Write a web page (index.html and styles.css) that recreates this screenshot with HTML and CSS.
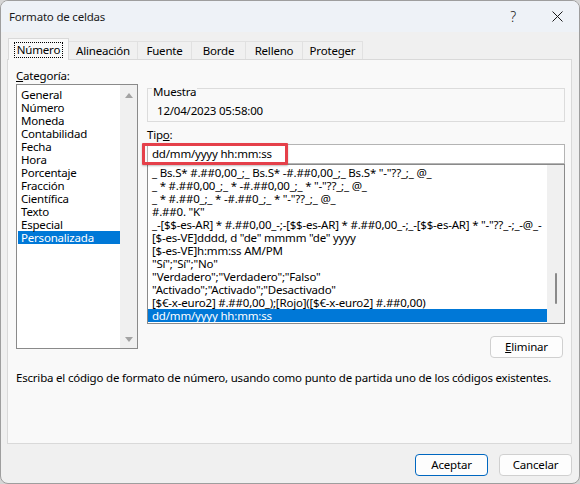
FILE: index.html
```html
<!DOCTYPE html>
<html lang="es">
<head>
<meta charset="utf-8">
<title>Formato de celdas</title>
<link rel="stylesheet" href="styles.css">
</head>
<body>
<div class="dialog">
  <div class="titlebar">
    <div class="title">Formato de celdas</div>
    <div class="tb-btn help">?</div>
    <div class="tb-btn close">
      <svg width="11" height="11" viewBox="0 0 11 11"><path d="M0.5 0.5 L10.5 10.5 M10.5 0.5 L0.5 10.5" stroke="#1a1a1a" stroke-width="1" fill="none"/></svg>
    </div>
  </div>
  <div class="body">
    <div class="tabs">
      <div class="tab tab-active tab-numero"><span class="focus">Número</span></div>
      <div class="tab tab-alineacion">Alineación</div>
      <div class="tab tab-fuente">Fuente</div>
      <div class="tab tab-borde">Borde</div>
      <div class="tab tab-relleno">Relleno</div>
      <div class="tab tab-proteger">Proteger</div>
    </div>
    <div class="panel">
      <div class="columns">
        <div class="col-left">
          <div class="label"><u>C</u>ategoría:</div>
          <div class="listbox cat-list">
            <div class="list-items">
              <div class="item">General</div>
              <div class="item">Número</div>
              <div class="item">Moneda</div>
              <div class="item">Contabilidad</div>
              <div class="item">Fecha</div>
              <div class="item">Hora</div>
              <div class="item">Porcentaje</div>
              <div class="item">Fracción</div>
              <div class="item">Científica</div>
              <div class="item">Texto</div>
              <div class="item">Especial</div>
              <div class="item item-selected">Personalizada</div>
            </div>
            <div class="scrollbar classic">
              <span class="arrow-up"></span>
              <span class="arrow-down"></span>
            </div>
          </div>
        </div>
        <div class="col-right">
          <div class="groupbox">
            <div class="group-label">Muestra</div>
            <div class="sample">12/04/2023 05:58:00</div>
          </div>
          <div class="label tipo-label">Tip<u>o</u>:</div>
          <div class="tipo-field">
            <div class="textbox">dd/mm/yyyy hh:mm:ss</div>
            <div class="highlight"></div>
          </div>
          <div class="listbox type-list">
            <div class="list-items">
              <div class="item">_ Bs.S* #.##0,00_;_ Bs.S* -#.##0,00_;_ Bs.S* "-"??_;_ @_</div>
              <div class="item">_ * #.##0,00_;_ * -#.##0,00_;_ * "-"??_;_ @_</div>
              <div class="item">_ * #.##0_;_ * -#.##0_;_ * "-"??_;_ @_</div>
              <div class="item">#.##0. "K"</div>
              <div class="item">_-[$$-es-AR] * #.##0,00_-;-[$$-es-AR] * #.##0,00_-;_-[$$-es-AR] * "-"??_-;_-@_-</div>
              <div class="item">[$-es-VE]dddd, d "de" mmmm "de" yyyy</div>
              <div class="item">[$-es-VE]h:mm:ss AM/PM</div>
              <div class="item">"Sí";"Sí";"No"</div>
              <div class="item">"Verdadero";"Verdadero";"Falso"</div>
              <div class="item">"Activado";"Activado";"Desactivado"</div>
              <div class="item">[$€-x-euro2] #.##0,00_);[Rojo]([$€-x-euro2] #.##0,00)</div>
              <div class="item item-selected">dd/mm/yyyy hh:mm:ss</div>
            </div>
            <div class="scrollbar thin">
              <span class="thumb"></span>
            </div>
          </div>
          <div class="button-row">
            <div class="button eliminar"><u>E</u>liminar</div>
          </div>
        </div>
      </div>
      <div class="description">Escriba el código de formato de número, usando como punto de partida uno de los códigos existentes.</div>
    </div>
    <div class="footer">
      <div class="button primary">Aceptar</div>
      <div class="button">Cancelar</div>
    </div>
  </div>
</div>
</body>
</html>
```
FILE: styles.css
```css
html, body {
  margin: 0;
  padding: 0;
  background: #d6d6d6;
}
body {
  font-family: "Noto Sans", "Open Sans", sans-serif;
  font-size: 11.5px;
  letter-spacing: -0.2px;
  color: #000;
}
.dialog {
  width: 580px;
  height: 484px;
  box-sizing: border-box;
  border: 1px solid #9e9e9e;
  border-radius: 8px;
  overflow: hidden;
  background: #f0f0f0;
  display: flex;
  flex-direction: column;
}
.titlebar {
  height: 31px;
  background: #eef2f7;
  display: flex;
  align-items: center;
  flex-shrink: 0;
}
.title {
  flex: 1;
  padding-left: 8px;
  line-height: 16px;
  color: #1a1a1a;
}
.tb-btn {
  width: 44px;
  height: 31px;
  display: flex;
  align-items: center;
  justify-content: center;
}
.help {
  font-size: 14px;
  font-weight: 300;
  color: #1a1a1a;
}
.body {
  flex: 1;
  padding: 6px 7px 0 6px;
  display: flex;
  flex-direction: column;
}
.tabs {
  display: flex;
  align-items: flex-end;
  padding-left: 1px;
}
.tab {
  height: 18px;
  box-sizing: border-box;
  border: 1px solid #e1e1e1;
  border-bottom: none;
  margin-left: -1px;
  background: #f0f0f0;
  line-height: 16px;
  padding-top: 1px;
  text-align: center;
  white-space: nowrap;
}
.tab-active {
  height: 22px;
  margin-bottom: -1px;
  margin-left: 0;
  background: #f9f9f9;
  border-color: #d9d9d9;
  position: relative;
  z-index: 1;
  padding-top: 3px;
}
.focus {
  display: inline-block;
  border: 1px dotted #000;
  padding: 0 2px;
  line-height: 14px;
}
.tab-numero { width: 61px; }
.tab-alineacion { width: 70px; }
.tab-fuente { width: 55px; }
.tab-borde { width: 55px; }
.tab-relleno { width: 58px; }
.tab-proteger { width: 61px; }
.panel {
  height: 385px;
  box-sizing: border-box;
  border: 1px solid #d9d9d9;
  background: #f9f9f9;
  padding: 8px 6px 0 8px;
}
.columns {
  display: grid;
  grid-template-columns: 122px 418px;
  column-gap: 9px;
}
.label {
  line-height: 16px;
}
.listbox {
  box-sizing: border-box;
  border: 1px solid #8a8a8a;
  background: #fff;
  display: flex;
}
.cat-list {
  height: 265px;
}
.list-items {
  flex: 1;
  min-width: 0;
  overflow: hidden;
}
.cat-list .list-items {
  padding: 3px 0 0 1px;
}
.item {
  height: 13px;
  line-height: 13px;
  white-space: nowrap;
  padding-left: 3px;
}
.type-list .item {
  padding-left: 4px;
}
.item-selected {
  background: #0078d7;
  color: #fff;
}
.scrollbar {
  width: 17px;
  background: #f0f0f0;
  flex-shrink: 0;
  display: flex;
  flex-direction: column;
  align-items: center;
}
.scrollbar.classic {
  justify-content: space-between;
  padding: 8px 0 6px;
}
.arrow-up, .arrow-down {
  width: 0;
  height: 0;
  border-left: 4px solid transparent;
  border-right: 4px solid transparent;
}
.arrow-up {
  border-bottom: 5px solid #a3a3a3;
}
.arrow-down {
  border-top: 5px solid #a3a3a3;
}
.scrollbar.thin {
  padding-top: 108px;
}
.thumb {
  width: 2px;
  height: 31px;
  border-radius: 1px;
  background: #8a8a8a;
}
.groupbox {
  margin-top: 20px;
  border: 1px solid #dcdcdc;
  height: 34px;
  box-sizing: border-box;
  padding-left: 9px;
}
.group-label {
  display: table;
  margin-top: -5px;
  margin-left: -5px;
  padding: 0 1px;
  background: #f9f9f9;
  line-height: 16px;
}
.sample {
  margin-top: 3px;
  line-height: 16px;
}
.tipo-label {
  margin-top: 5px;
}
.tipo-field {
  position: relative;
  margin-top: 1px;
}
.textbox {
  height: 20px;
  box-sizing: border-box;
  border: 1px solid #b4b4b4;
  background: #fff;
  padding-left: 4px;
  line-height: 18px;
}
.highlight {
  position: absolute;
  left: -5px;
  top: -1px;
  width: 146px;
  height: 22px;
  box-sizing: border-box;
  border: 3px solid #e5404a;
  border-radius: 1px;
  box-shadow: 0 1px 2px rgba(0, 0, 0, 0.25);
}
.type-list {
  height: 160px;
}
.type-list .list-items {
  padding-top: 1px;
}
.button-row {
  display: flex;
  justify-content: flex-end;
  margin-top: 12px;
  padding-right: 2px;
}
.button {
  height: 22px;
  box-sizing: border-box;
  border: 1px solid #d0d0d0;
  border-radius: 4px;
  background: #fdfdfd;
  line-height: 20px;
  text-align: center;
  width: 73px;
}
.description {
  margin-top: 12px;
  line-height: 16px;
  white-space: nowrap;
}
.footer {
  display: flex;
  justify-content: flex-end;
  gap: 11px;
  margin-top: 10px;
}
.button.primary {
  border-color: #0067c0;
}
```
